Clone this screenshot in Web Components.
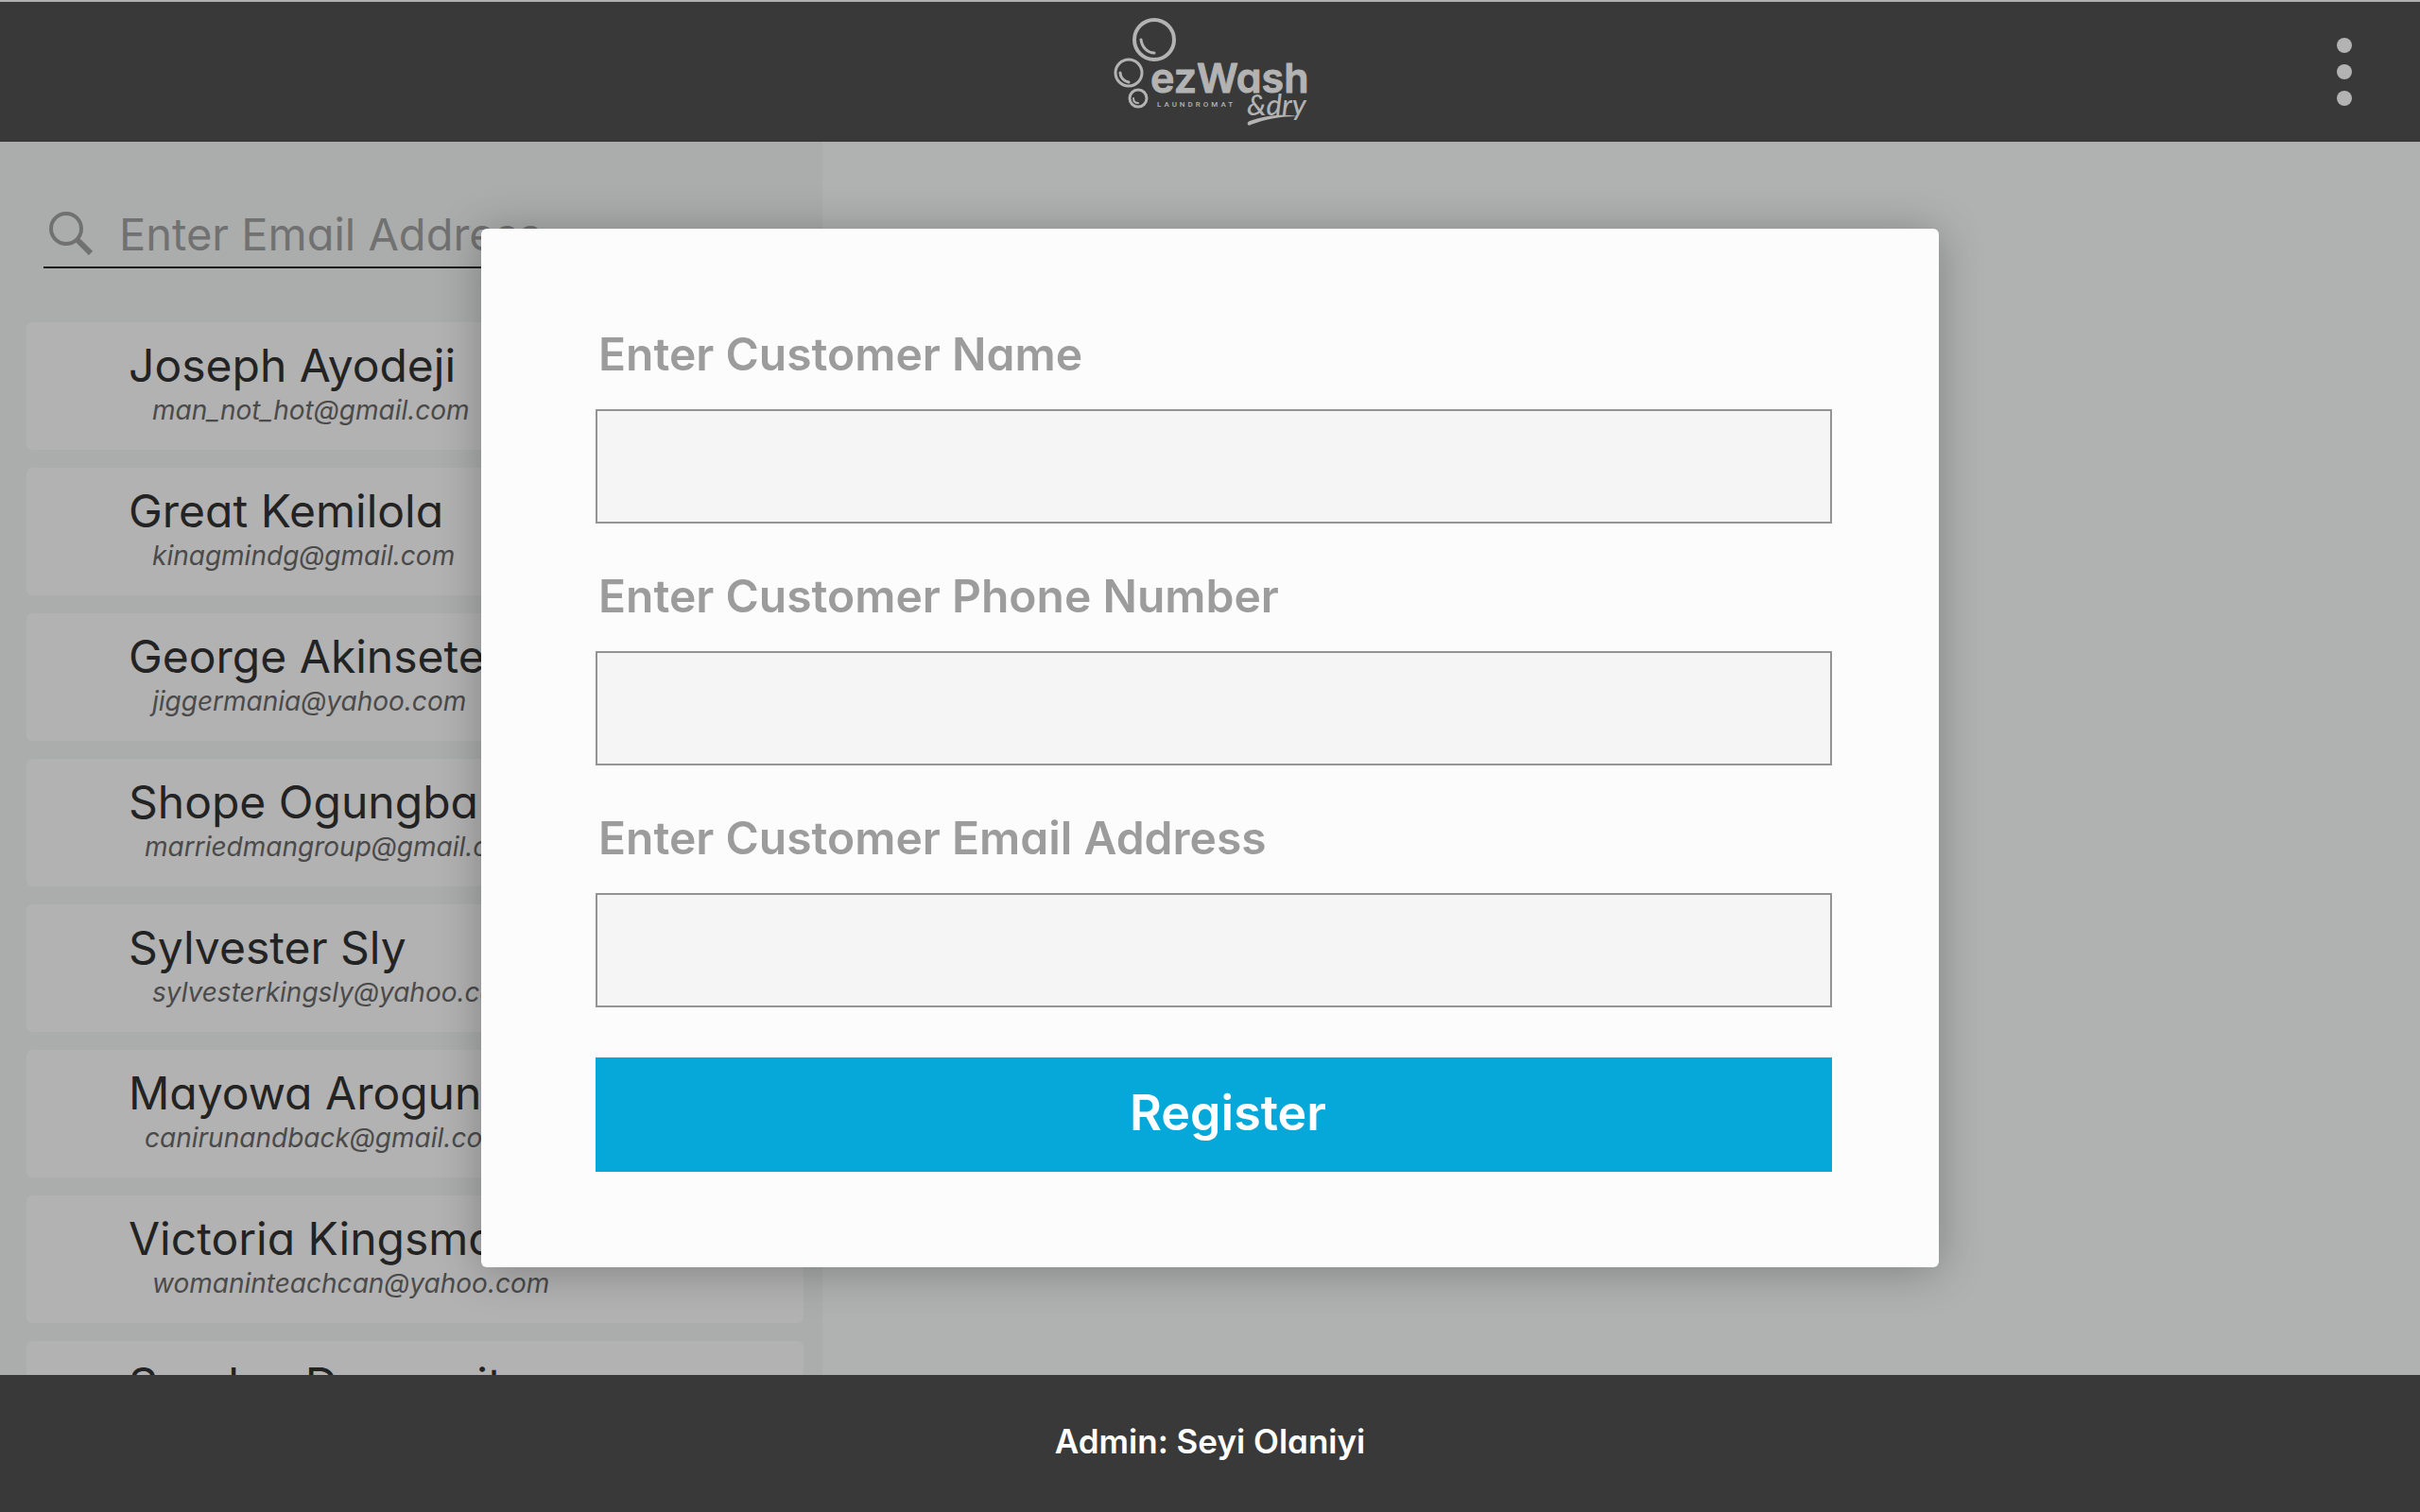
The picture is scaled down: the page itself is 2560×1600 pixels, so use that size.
<!DOCTYPE html>
<html lang="en">
<head>
<meta charset="utf-8">
<title>ezWash &amp; dry – Register customer</title>
<style>
  html, body { margin: 0; height: 100%; }
  body { font-family: Inter, "Liberation Sans", sans-serif; font-feature-settings: "cv11"; background: #b0b2b1; overflow: hidden; }
</style>
</head>
<body>
<ez-app></ez-app>
<script>
class EzElement extends HTMLElement {
  constructor() {
    super();
    this.attachShadow({ mode: "open" }).innerHTML =
      `<style>*{box-sizing:border-box}input,button{font-feature-settings:inherit}${this.constructor.css}</style>${this.template()}`;
  }
  template() { return "<slot></slot>"; }
}

customElements.define("ez-logo", class extends EzElement {
  static css = `
    :host { display: block; color: #b3b3b3; }
    svg { display: block; overflow: visible; }
    .word { font: 600 43px Inter, sans-serif; font-feature-settings: "cv11"; stroke: currentColor; stroke-width: 1; stroke-linejoin: round; }
    .sub { font: 500 8px Roboto, sans-serif; letter-spacing: 3px; }
    .dry { font: italic 500 31px Lato, sans-serif; }`;
  template() {
    return `<svg width="208" height="116" viewBox="0 0 208 116" fill="currentColor" role="img" aria-label="ezWash laundromat and dry">
      <g fill="none" stroke="currentColor" stroke-linecap="round">
        <circle cx="45" cy="24" r="21" stroke-width="4"/>
        <path d="M31 24c1 8 7 14 14 14" stroke-width="3"/>
        <circle cx="18" cy="59" r="14" stroke-width="3"/>
        <path d="M9 59c0 5 4 9 9 10" stroke-width="3"/>
        <circle cx="28" cy="86" r="9" stroke-width="3"/>
        <path d="M23 86c0 3 2 5 5 5" stroke-width="2"/>
      </g>
      <path d="M144 114c-1-2 0-3 2-4c14-5 32-8 51-5c-18 0-34 3-50 9c-1 1-2 1-3 0z"/>
      <text class="word" x="41" y="80">ezWash</text>
      <text class="sub" x="48" y="95">LAUNDROMAT</text>
      <text class="dry" x="143" y="104">&amp;dry</text>
    </svg>`;
  }
});

customElements.define("ez-header", class extends EzElement {
  static css = `
    :host { display: grid; grid-template-columns: 1fr auto 1fr; align-items: center; height: 150px;
            padding: 0 66px; background: #393939; border-top: 2px solid #b0b2b1; }
    button { justify-self: end; display: flex; flex-direction: column; gap: 12px; padding: 6px; border: 0; background: none; }
    i { width: 16px; height: 16px; border-radius: 50%; background: #b3b3b3; }
    ez-logo { grid-column: 2; }`;
  template() {
    return `<ez-logo></ez-logo><button type="button" aria-label="Menu"><i></i><i></i><i></i></button>`;
  }
});

customElements.define("ez-search", class extends EzElement {
  static css = `
    :host { display: flex; flex: none; align-items: center; gap: 28px; height: 72px; margin: 0 28px 0 18px;
            padding-left: 6px; border-bottom: 2px solid #1a1c1d; }
    svg { flex: none; }
    input { flex: 1; min-width: 0; height: 64px; padding: 0; border: 0; outline: 0; background: none;
            font-family: inherit; font-size: 47px; color: #717171; }
    input::placeholder { color: #717171; opacity: 1; }`;
  template() {
    return `<svg width="46" height="46" viewBox="0 0 46 46" fill="none" stroke="#717171">
        <circle cx="18" cy="18" r="16" stroke-width="4"/><path d="M29 29l15 15" stroke-width="6"/></svg>
      <input type="search" aria-label="Enter Email Address" placeholder="Enter Email Address">`;
  }
});

customElements.define("ez-customer", class extends EzElement {
  static css = `
    :host { display: flex; flex-direction: column; flex: none; height: 135px; padding: 16px 0 0 108px;
            border-radius: 6px; background: #b2b2b2; white-space: nowrap; overflow: hidden; }
    .name { font-size: 48px; line-height: 60px; color: #232323; }
    .mail { padding-left: 25px; font-size: 28px; line-height: 34px; font-style: italic; color: #4a4a4a; }
    :host([outdent]) .mail { padding-left: 17px; }`;
  template() {
    return `<span class="name"><slot></slot></span><span class="mail"><slot name="mail"></slot></span>`;
  }
});

customElements.define("ez-sidebar", class extends EzElement {
  static css = `
    :host { display: flex; flex-direction: column; width: 34%; padding: 62px 20px 0 28px;
            background: #abadac; overflow: hidden; }
    .list { display: flex; flex: none; flex-direction: column; gap: 19px; padding-top: 57px; }`;
  template() {
    return `<ez-search></ez-search><div class="list"><slot></slot></div>`;
  }
});

customElements.define("ez-field", class extends EzElement {
  static css = `
    :host { display: block; }
    label { display: block; padding-left: 3px; font-size: 48px; font-weight: 600; line-height: 60px; color: #9c9c9c; }
    input { display: block; width: 100%; height: 121px; margin-top: 28px; padding: 0 24px;
            border: 2px solid #949494; border-radius: 0; outline: 0; background: #f5f5f5;
            font-family: inherit; font-size: 47px; color: #232323; }`;
  template() {
    return `<label for="box">${this.getAttribute("label")}</label><input id="box" type="${this.getAttribute("type")}">`;
  }
});

customElements.define("ez-register", class extends EzElement {
  static css = `
    :host { position: fixed; inset: 0; display: flex; align-items: center; justify-content: center; padding-bottom: 17px; }
    form { display: flex; flex-direction: column; width: 1542px; max-width: 90%; padding: 103px 113px 101px 121px;
           border-radius: 6px; background: #fcfcfc; box-shadow: 0 4px 48px rgba(0,0,0,.28); }
    .fields { display: flex; flex-direction: column; gap: 47px; }
    button { height: 121px; margin-top: 53px; padding: 0 0 4px 30px; border: 0; background: #06a7d9; color: #fff;
             font-family: inherit; font-size: 52px; font-weight: 600; }`;
  template() {
    return `<form><div class="fields">
        <ez-field label="Enter Customer Name" type="text"></ez-field>
        <ez-field label="Enter Customer Phone Number" type="tel"></ez-field>
        <ez-field label="Enter Customer Email Address" type="email"></ez-field>
      </div><button type="button">Register</button></form>`;
  }
});

customElements.define("ez-footer", class extends EzElement {
  static css = `
    :host { display: flex; align-items: center; justify-content: center; height: 145px; padding-bottom: 6px;
            box-sizing: border-box; background: #393939; color: #fff; font-size: 35px; font-weight: 600; line-height: 44px; }`;
});

customElements.define("ez-app", class extends EzElement {
  static css = `
    :host { display: flex; flex-direction: column; height: 100vh; }
    main { flex: 1; min-height: 0; display: flex; overflow: hidden; }
    ez-header, ez-footer { flex: none; }`;
  template() {
    const people = [
      ["Joseph Ayodeji", "man_not_hot@gmail.com"],
      ["Great Kemilola", "kinagmindg@gmail.com"],
      ["George Akinsete", "jiggermania@yahoo.com"],
      ["Shope Ogungba", "marriedmangroup@gmail.com", "outdent"],
      ["Sylvester Sly", "sylvesterkingsly@yahoo.com"],
      ["Mayowa Arogun", "canirunandback@gmail.com", "outdent"],
      ["Victoria Kingsma", "womaninteachcan@yahoo.com"],
      ["Sunday Damorait", ""],
    ];
    return `<ez-header></ez-header>
      <main><ez-sidebar>${people.map(([name, mail, attr = ""]) =>
        `<ez-customer ${attr}>${name}<span slot="mail">${mail}</span></ez-customer>`).join("")}</ez-sidebar></main>
      <ez-footer>Admin: Seyi Olaniyi</ez-footer>
      <ez-register></ez-register>`;
  }
});
</script>
</body>
</html>
